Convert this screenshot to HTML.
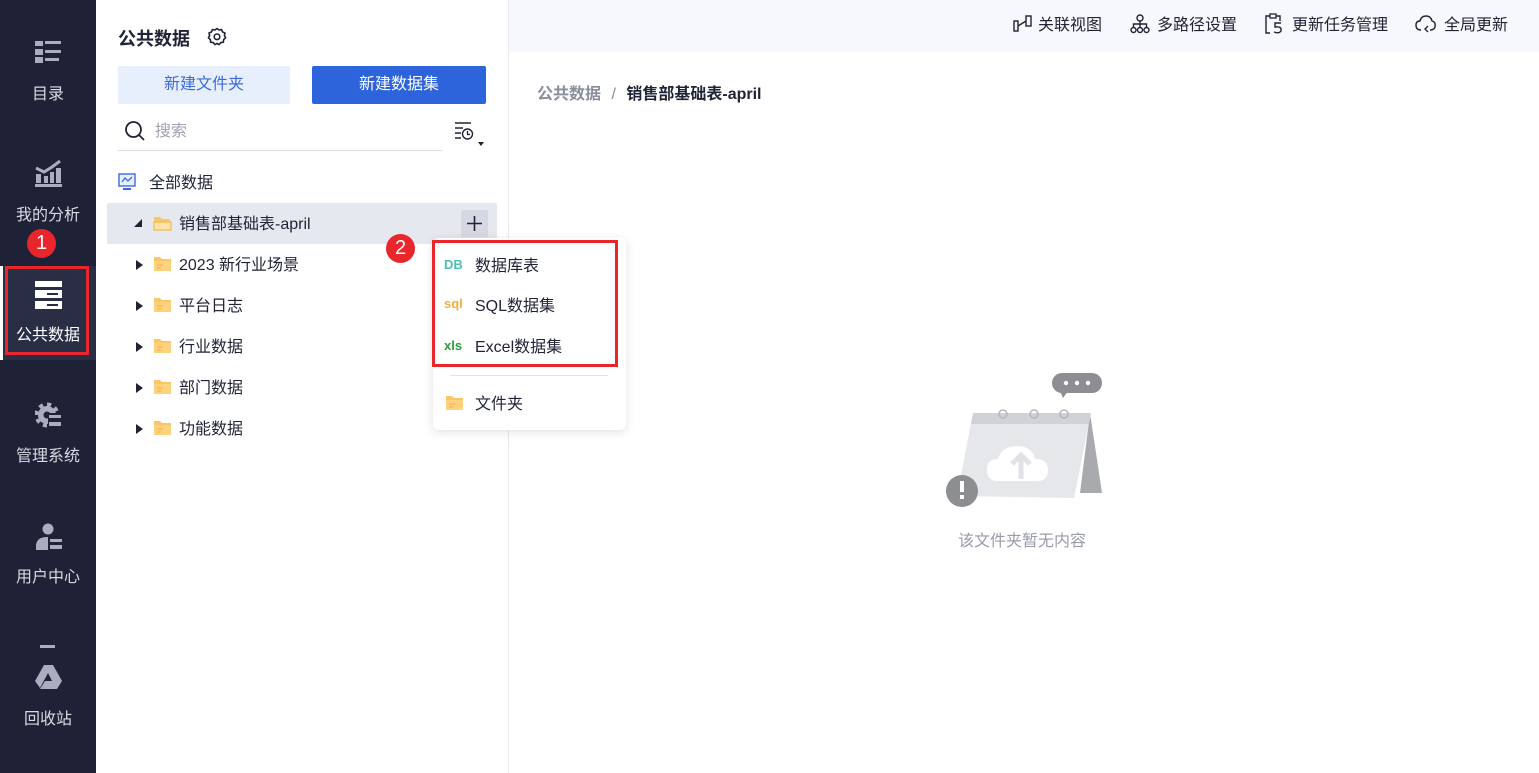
<!DOCTYPE html>
<html><head><meta charset="utf-8"><style>
*{margin:0;padding:0;box-sizing:border-box}
body{width:1539px;height:773px;overflow:hidden;font-family:"Liberation Sans","Noto Sans CJK SC",sans-serif;background:#fff;position:relative;color:#1f2335;line-height:1.25}
.a{position:absolute}
#side{left:0;top:0;width:96px;height:773px;background:#1f2236}
.nav{position:absolute;left:0;width:96px;text-align:center;color:#d8dae3;font-size:16px}
.t{font-size:16px;white-space:nowrap}
.row{position:absolute;left:107px;width:390px;height:41px;font-size:16px;color:#1f2335}
.row .tri{position:absolute;left:29px;top:16px;width:0;height:0;border-top:5px solid transparent;border-bottom:5px solid transparent;border-left:7px solid #1f2335}
.row .fd{position:absolute;left:46px;top:12px}
.row span{position:absolute;left:72px;top:12px}
.mi{position:absolute;left:445px;font-size:16px;color:#1f2335}
.tb{position:absolute;top:16px;font-size:16px;color:#1f2335;white-space:nowrap}
</style></head><body>
<div id="side" class="a"></div>
<svg class="a" style="left:35px;top:40px" width="27" height="24"><rect x="0" y="1" width="8" height="5" fill="#a9adbd"/><rect x="10" y="1" width="16" height="3" fill="#a9adbd"/><rect x="0" y="9" width="8" height="6" fill="#a9adbd"/><rect x="10" y="10" width="16" height="3" fill="#a9adbd"/><rect x="0" y="17" width="8" height="6" fill="#a9adbd"/><rect x="10" y="18" width="14" height="3" fill="#a9adbd"/></svg>
<div class="nav t" style="top:85px">目录</div>
<svg class="a" style="left:35px;top:160px" width="27" height="27"><path d="M1 8 L9 12 L17 7 L25 1" stroke="#a9adbd" stroke-width="3" fill="none"/><rect x="1" y="14" width="5" height="9" fill="#a9adbd"/><rect x="9" y="16" width="4" height="7" fill="#a9adbd"/><rect x="15" y="12" width="4" height="11" fill="#a9adbd"/><rect x="21" y="8" width="5" height="15" fill="#a9adbd"/><rect x="0" y="24" width="27" height="3" fill="#a9adbd"/></svg>
<div class="nav t" style="top:206px">我的分析</div>
<div class="a" style="left:0;top:266px;width:96px;height:94px;background:#2a2e44"></div>
<div class="a" style="left:0;top:266px;width:3px;height:94px;background:#fff"></div>
<div class="a" style="left:5px;top:266px;width:84px;height:89px;border:3px solid #e8262c"></div>
<svg class="a" style="left:35px;top:281px" width="27" height="28"><rect x="0" y="0" width="27" height="6" fill="#fff"/><rect x="0" y="9" width="27" height="8" fill="#fff"/><rect x="0" y="20" width="27" height="8" fill="#fff"/><rect x="12" y="12" width="11" height="2" fill="#2a2e44"/><rect x="12" y="23" width="11" height="2" fill="#2a2e44"/></svg>
<div class="nav t" style="top:326px;color:#fff">公共数据</div>
<div class="a" style="left:27px;top:229px;width:29px;height:29px;border-radius:50%;background:#e8262c;color:#fff;font-size:20px;text-align:center;line-height:29px">1</div>
<svg class="a" style="left:35px;top:402px" width="27" height="27"><circle cx="12" cy="13" r="10.5" fill="none" stroke="#a9adbd" stroke-width="4" stroke-dasharray="4.1 4.1"/><circle cx="12" cy="13" r="9" fill="#a9adbd"/><circle cx="12" cy="13" r="3.5" fill="#1f2236"/><rect x="13" y="11" width="14" height="16" fill="#1f2236"/><rect x="14" y="13" width="12" height="3" fill="#a9adbd"/><rect x="14" y="20" width="12" height="4" fill="#a9adbd"/></svg>
<div class="nav t" style="top:447px">管理系统</div>
<svg class="a" style="left:35px;top:523px" width="27" height="27"><circle cx="13" cy="6" r="5.5" fill="#a9adbd"/><path d="M1 27 L1 22 Q2 14 12 14 L13 14 L13 27Z" fill="#a9adbd"/><rect x="15" y="16" width="12" height="3" fill="#a9adbd"/><rect x="15" y="22" width="12" height="4" fill="#a9adbd"/></svg>
<div class="nav t" style="top:568px">用户中心</div>
<div class="a" style="left:40px;top:645px;width:15px;height:3px;background:#a9adbd"></div>
<svg class="a" style="left:34px;top:664px" width="29" height="26"><path d="M10 1 L19 1 L28 17 L23 25 L6 25 L11 17 L18 17 L14 9 L6 24 L1 17Z" fill="#a9adbd"/></svg>
<div class="nav t" style="top:710px">回收站</div>

<div class="a" style="left:508px;top:0;width:1px;height:773px;background:#e8eaf0"></div>
<div class="a" style="left:118px;top:28px;font-size:18px;font-weight:bold;color:#1f2335">公共数据</div>
<svg class="a" style="left:207px;top:27px" width="20" height="20" viewBox="0 0 20 20"><path d="M10 1.5 L12 3 L14.6 2.6 L15.6 5 L18 6 L17.4 8.6 L18.6 10.8 L16.6 12.6 L16.4 15.2 L13.8 15.6 L12 17.6 L10 16.4 L8 17.6 L6.2 15.6 L3.6 15.2 L3.4 12.6 L1.4 10.8 L2.6 8.6 L2 6 L4.4 5 L5.4 2.6 L8 3Z" fill="none" stroke="#1f2335" stroke-width="1.6" stroke-linejoin="round"/><circle cx="10" cy="9.8" r="2.8" fill="none" stroke="#1f2335" stroke-width="1.6"/></svg>
<div class="a" style="left:118px;top:66px;width:172px;height:38px;background:#e8effc;border-radius:2px;color:#3c6ade;font-size:16px;text-align:center;line-height:38px">新建文件夹</div>
<div class="a" style="left:312px;top:66px;width:174px;height:38px;background:#2d63db;border-radius:2px;color:#fff;font-size:16px;text-align:center;line-height:38px">新建数据集</div>
<svg class="a" style="left:124px;top:120px" width="22" height="22"><circle cx="9.5" cy="9.5" r="7.5" fill="none" stroke="#1f2335" stroke-width="1.8"/><path d="M15 15 L20 20" stroke="#1f2335" stroke-width="1.8"/></svg>
<div class="a" style="left:155px;top:122px;font-size:16px;color:#a0a3b0">搜索</div>
<div class="a" style="left:118px;top:150px;width:324px;height:1px;background:#dcdee6"></div>
<svg class="a" style="left:454px;top:121px" width="32" height="28"><path d="M1 2 H17 M1 7 H9 M1 12 H7 M1 17 H7" stroke="#1f2335" stroke-width="1.4"/><circle cx="13.5" cy="13" r="5" fill="none" stroke="#1f2335" stroke-width="1.4"/><path d="M13.5 10 V13.5 H16" stroke="#1f2335" stroke-width="1.3" fill="none"/><path d="M24 21 L30 21 L27 25Z" fill="#1f2335"/></svg>
<svg class="a" style="left:118px;top:173px" width="18" height="18"><rect x="1" y="1" width="16" height="12" fill="#e8effc" stroke="#3c6ade" stroke-width="1.4"/><path d="M4 9 L7 5 L10 8 L14 4" stroke="#3c6ade" stroke-width="1.3" fill="none"/><rect x="5" y="15" width="8" height="2" fill="#3c6ade"/></svg>
<div class="a" style="left:149px;top:174px;font-size:16px">全部数据</div>

<div class="row" style="top:203px;background:#e6e8ef;border-radius:2px">
<div style="position:absolute;left:27px;top:16px;width:0;height:0;border-left:8px solid transparent;border-bottom:8px solid #1f2335"></div>
<svg class="fd" width="19" height="16"><path d="M1 2 H7 L9 4 H17 V7 H1Z" fill="#fbc766"/><path d="M1 7 H18 V15 H1Z" fill="#fde4aa" stroke="#f8b84a" stroke-width="1.2"/></svg>
<span>销售部基础表-april</span>
<div style="position:absolute;left:354px;top:7px;width:27px;height:27px;background:#d5d8e2;border-radius:2px"><svg width="27" height="27"><path d="M13.5 6 V21 M6 13.5 H21" stroke="#1f2335" stroke-width="1.6"/></svg></div>
</div>

<div class="row" style="top:244px"><div class="tri"></div><svg class="fd" width="19" height="16"><path d="M1 1 H7 L9 3 H18 V15 H1Z" fill="#fbc766"/><path d="M1 5 H18 V15 H1Z" fill="#fcd27e"/><path d="M4 9 H10 M4 12 H8" stroke="#f3ae3e" stroke-width="1"/></svg><span>2023 新行业场景</span></div>
<div class="row" style="top:285px"><div class="tri"></div><svg class="fd" width="19" height="16"><path d="M1 1 H7 L9 3 H18 V15 H1Z" fill="#fbc766"/><path d="M1 5 H18 V15 H1Z" fill="#fcd27e"/><path d="M4 9 H10 M4 12 H8" stroke="#f3ae3e" stroke-width="1"/></svg><span>平台日志</span></div>
<div class="row" style="top:326px"><div class="tri"></div><svg class="fd" width="19" height="16"><path d="M1 1 H7 L9 3 H18 V15 H1Z" fill="#fbc766"/><path d="M1 5 H18 V15 H1Z" fill="#fcd27e"/><path d="M4 9 H10 M4 12 H8" stroke="#f3ae3e" stroke-width="1"/></svg><span>行业数据</span></div>
<div class="row" style="top:367px"><div class="tri"></div><svg class="fd" width="19" height="16"><path d="M1 1 H7 L9 3 H18 V15 H1Z" fill="#fbc766"/><path d="M1 5 H18 V15 H1Z" fill="#fcd27e"/><path d="M4 9 H10 M4 12 H8" stroke="#f3ae3e" stroke-width="1"/></svg><span>部门数据</span></div>
<div class="row" style="top:408px"><div class="tri"></div><svg class="fd" width="19" height="16"><path d="M1 1 H7 L9 3 H18 V15 H1Z" fill="#fbc766"/><path d="M1 5 H18 V15 H1Z" fill="#fcd27e"/><path d="M4 9 H10 M4 12 H8" stroke="#f3ae3e" stroke-width="1"/></svg><span>功能数据</span></div>

<div class="a" style="left:386px;top:234px;width:29px;height:29px;border-radius:50%;background:#e8262c;color:#fff;font-size:20px;text-align:center;line-height:29px">2</div>

<div class="a" style="left:433px;top:238px;width:193px;height:192px;background:#fff;border-radius:6px;box-shadow:0 2px 10px rgba(0,0,0,0.12)"></div>
<div class="a" style="left:432px;top:240px;width:186px;height:127px;border:3px solid #e8262c"></div>
<div class="a" style="left:444px;top:257px;font-size:13px;font-weight:bold;color:#4fbfae">DB</div>
<div class="mi" style="left:475px;top:257px">数据库表</div>
<div class="a" style="left:444px;top:296px;font-size:13px;font-weight:bold;color:#f4ae3f">sql</div>
<div class="mi" style="left:475px;top:297px">SQL数据集</div>
<div class="a" style="left:444px;top:338px;font-size:13px;font-weight:bold;color:#2c9d3b">xls</div>
<div class="mi" style="left:475px;top:338px">Excel数据集</div>
<div class="a" style="left:450px;top:375px;width:158px;height:1px;background:#e2e4ea"></div>
<svg class="a" style="left:445px;top:395px" width="19" height="16"><path d="M1 1 H7 L9 3 H18 V15 H1Z" fill="#fbc766"/><path d="M1 5 H18 V15 H1Z" fill="#fcd27e"/><path d="M4 9 H10 M4 12 H8" stroke="#f3ae3e" stroke-width="1"/></svg>
<div class="mi" style="left:475px;top:395px">文件夹</div>

<div class="a" style="left:509px;top:0;width:1030px;height:52px;background:#f7f8fb"></div>
<svg class="a" style="left:1013px;top:15px" width="20" height="18"><rect x="1" y="6" width="4" height="10" fill="none" stroke="#1f2335" stroke-width="1.4"/><rect x="13" y="1" width="5" height="10" fill="none" stroke="#1f2335" stroke-width="1.4"/><path d="M5 11 L13 6" stroke="#1f2335" stroke-width="1.4"/></svg>
<div class="tb" style="left:1038px">关联视图</div>
<svg class="a" style="left:1130px;top:14px" width="20" height="20"><circle cx="10" cy="4" r="3" fill="none" stroke="#1f2335" stroke-width="1.4"/><circle cx="3.5" cy="16" r="2.5" fill="none" stroke="#1f2335" stroke-width="1.4"/><circle cx="10" cy="16" r="2.5" fill="none" stroke="#1f2335" stroke-width="1.4"/><circle cx="16.5" cy="16" r="2.5" fill="none" stroke="#1f2335" stroke-width="1.4"/><path d="M10 7 V13 M3.5 13 V10 H16.5 V13" stroke="#1f2335" stroke-width="1.4" fill="none"/></svg>
<div class="tb" style="left:1157px">多路径设置</div>
<svg class="a" style="left:1265px;top:13px" width="20" height="22"><path d="M5 3 H1 V20 H5 M11 3 H15 V8" stroke="#1f2335" stroke-width="1.4" fill="none"/><rect x="5" y="1" width="6" height="4" fill="none" stroke="#1f2335" stroke-width="1.3"/><path d="M16 10 H10 V14 Q17 13 16 18 Q14 21 9 19" stroke="#1f2335" stroke-width="1.4" fill="none"/></svg>
<div class="tb" style="left:1292px">更新任务管理</div>
<svg class="a" style="left:1415px;top:14px" width="22" height="20"><path d="M6 16 Q1 16 1 11 Q1 7 5 7 Q6 2 11 2 Q16 2 17 7 Q21 8 20 13 Q19 16 15 16" stroke="#1f2335" stroke-width="1.4" fill="none"/><path d="M13 12 L10 15 L13 18" stroke="#1f2335" stroke-width="1.4" fill="none"/></svg>
<div class="tb" style="left:1444px">全局更新</div>

<div class="a" style="left:537px;top:85px;font-size:16px;font-weight:bold;color:#8a8d9c">公共数据 <span style="font-weight:normal;margin:0 6px">/</span> <span style="color:#1f2335">销售部基础表-april</span></div>

<svg class="a" style="left:940px;top:370px" width="170" height="140">
<rect x="112" y="3" width="50" height="20" rx="10" fill="#8d8e92"/>
<path d="M120 21 L123 28 L128 21Z" fill="#8d8e92"/>
<circle cx="126" cy="13" r="2.2" fill="#fff"/><circle cx="137" cy="13" r="2.2" fill="#fff"/><circle cx="148" cy="13" r="2.2" fill="#fff"/>
<path d="M150 43 L162 123 L140 123 Z" fill="#a9aaae"/>
<path d="M33 43 L151 43 L134 128 L17 126 Z" fill="#e6e7eb"/>
<path d="M33 43 L151 43 L149 54 L31 54 Z" fill="#d0d2d8"/>
<circle cx="63" cy="44" r="4" fill="none" stroke="#b6b7bc" stroke-width="1.5"/><circle cx="94" cy="44" r="4" fill="none" stroke="#b6b7bc" stroke-width="1.5"/><circle cx="124" cy="44" r="4" fill="none" stroke="#b6b7bc" stroke-width="1.5"/>
<path d="M58 111 Q47 111 47 100 Q47 89 58 89 Q62 76 77 76 Q92 76 95 89 Q108 89 108 100 Q108 111 97 111Z" fill="#fff"/>
<path d="M81 109 V85 M72 94 L81 85 L90 94" stroke="#e1e2e6" stroke-width="5" fill="none"/>
<circle cx="22" cy="121" r="16" fill="#8d8e92"/>
<rect x="20" y="111" width="4" height="11" fill="#fff"/><rect x="20" y="125" width="4" height="4" fill="#fff"/>
</svg>
<div class="a" style="left:958px;top:532px;font-size:16px;color:#9a9cab">该文件夹暂无内容</div>
</body></html>
